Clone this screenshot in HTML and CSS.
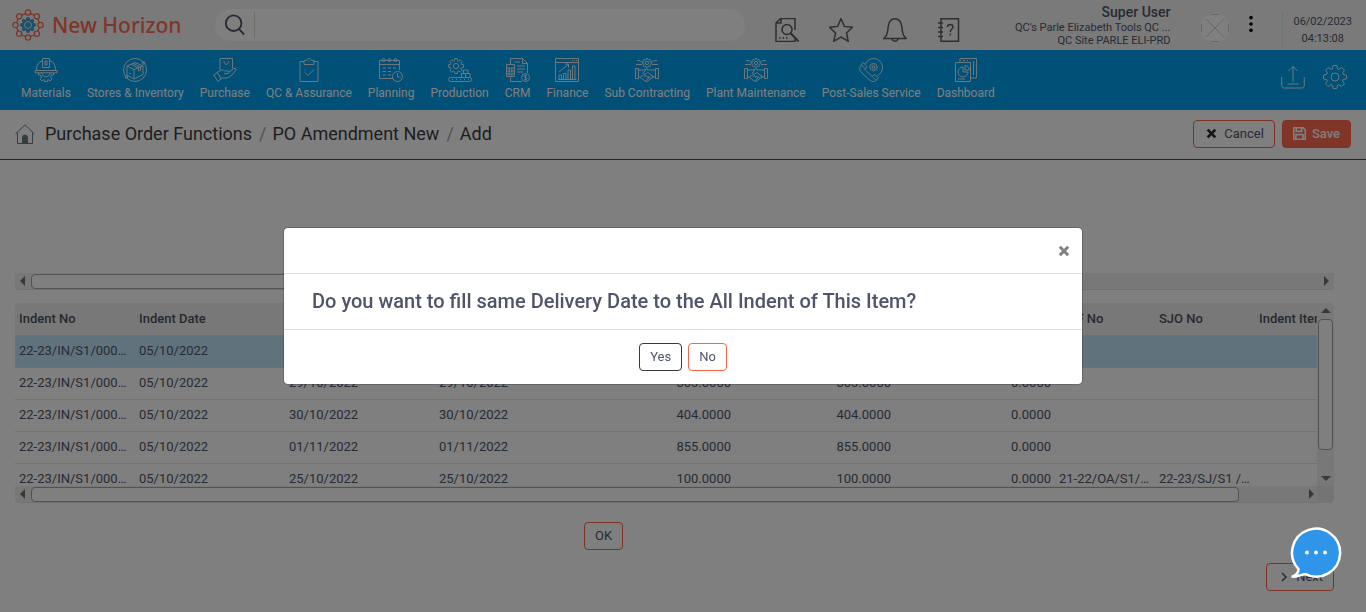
FILE: index.html
```html
<!DOCTYPE html>
<html lang="en">
<head>
<meta charset="utf-8">
<meta name="viewport" content="width=device-width, initial-scale=1">
<title>PO Amendment New</title>
<link rel="stylesheet" href="styles.css">
</head>
<body>
<svg class="sprite" aria-hidden="true">
  <defs>
    <path id="tooth" vector-effect="non-scaling-stroke" d="M-2.6-8.2L-1.9-11.5H1.9L2.6-8.2L4-7.6"/>
    <g id="gear">
      <use href="#tooth"/><use href="#tooth" transform="rotate(45)"/><use href="#tooth" transform="rotate(90)"/><use href="#tooth" transform="rotate(135)"/>
      <use href="#tooth" transform="rotate(180)"/><use href="#tooth" transform="rotate(225)"/><use href="#tooth" transform="rotate(270)"/><use href="#tooth" transform="rotate(315)"/>
      <circle r="4" vector-effect="non-scaling-stroke"/>
    </g>
    <symbol id="handshake" viewBox="0 0 24 24">
      <use href="#gear" transform="translate(12 5) scale(.4)"/>
      <path d="M2 2.500h3l1.500 1.500h1M1 6.500h6M22 2.500h-3L17.500 4h-1M23 6.500h-6"/>
      <path d="M.5 10.500h3v10h-3zM20.500 10.500h3v10h-3zM3.500 12h5l3-1 3 1h6M3.500 19h1.500l5 4 2 .5 6-4.500h2.500M11 11.500l-3 4c1 1.500 3 1 4.500-1.200l6.500 4.700M5.500 19l2-2 1.500 1.500 1.500-1 1 1.500 1.500-.5.500 1.500-2 2.500M15.500 16.500l2.500 2.500M13.500 18l2.500 2.500"/>
    </symbol>
  </defs>
</svg>

<div class="page">
  <header class="topbar">
    <a class="brand" href="#">
      <svg class="brand-mark" viewBox="0 0 32 32" aria-hidden="true">
        <g fill="none" stroke="#f76a52" stroke-width="1.300">
          <circle cx="16" cy="16" r="11.500"/>
          <g fill="#f4f4f4">
            <circle cx="16" cy="3.500" r="2.600"/><circle cx="16" cy="28.500" r="2.600"/><circle cx="3.500" cy="16" r="2.600"/><circle cx="28.500" cy="16" r="2.600"/>
            <circle cx="7.200" cy="7.200" r="2.600"/><circle cx="24.800" cy="7.200" r="2.600"/><circle cx="7.200" cy="24.800" r="2.600"/><circle cx="24.800" cy="24.800" r="2.600"/>
          </g>
        </g>
        <g stroke="#3aa0d4" stroke-width="4" stroke-linecap="round"><path d="M16 10v12M10 16h12M11.800 11.800l8.400 8.400M20.200 11.800l-8.400 8.400"/></g>
        <circle cx="16" cy="16" r="5" fill="#3aa0d4"/><circle cx="16" cy="16" r="3.500" fill="none" stroke="#d8ecf5"/>
      </svg>
      <span>New Horizon</span>
    </a>
    <form class="search">
      <button type="button" class="search-button" aria-label="Search">
        <svg viewBox="0 0 24 24"><circle cx="10.500" cy="10" r="8.500"/><path d="M16.500 16.500l5.500 6"/></svg>
      </button>
      <input type="text" aria-label="Search the application">
    </form>
    <div class="quick">
      <a href="#" aria-label="Find document"><svg viewBox="0 0 24 24"><path d="M20 12V.500H5.500L1 5v18.500h19v-3M1 5h5V.500"/><circle cx="12" cy="11.500" r="5"/><path d="M15.500 15l8 8.500" stroke-width="2"/><path d="M4 20h1.500M7.500 20H9M11 20h1.500"/></svg></a>
      <a href="#" aria-label="Favourites"><svg viewBox="0 0 24 24"><path d="M12 .800l3.400 7.600 8.100.900-6 5.700 1.700 8.200L12 19l-7.200 4.200L6.500 15l-6-5.700 8.100-.900z"/></svg></a>
      <a href="#" aria-label="Notifications"><svg viewBox="0 0 24 24"><path d="M.800 20.500h22.400c-2-1.500-3.200-3.500-3.700-6.500l-.8-6C18 3.500 15.500.800 12 .800S6 3.500 5.300 8l-.8 6c-.5 3-1.700 5-3.700 6.500zM9 20.500c.500 3.500 5.500 3.500 6 0"/></svg></a>
      <a href="#" aria-label="Help"><svg viewBox="0 0 24 24"><path d="M4 .800h17.500v22.400H4zM1 5h5M1 9.500h5M1 14h5M1 18.500h5"/><path d="M10.500 9c0-3.500 5.500-3.500 5.500 0 0 2-2.700 2-2.700 5M13.300 15.500v2"/></svg></a>
    </div>
    <div class="user">
      <strong>Super User</strong>
      <span>QC's Parle Elizabeth Tools QC ...</span>
      <span>QC Site PARLE ELI-PRD</span>
    </div>
    <svg class="avatar" viewBox="0 0 30 30" aria-hidden="true"><circle cx="15" cy="15" r="14.500"/><path d="M6 6l18 18M24 6L6 24M11 1.500h8M11 28.500h8M1.500 11v8M28.500 11v8"/></svg>
    <button type="button" class="more" aria-label="More"><svg viewBox="0 0 22 22"><circle cx="11" cy="4" r="2"/><circle cx="11" cy="11" r="2"/><circle cx="11" cy="18" r="2"/></svg></button>
    <div class="clock"><span>06/02/2023</span><span>04:13:08</span></div>
  </header>

  <nav class="mainnav">
    <a href="#"><svg viewBox="0 0 24 24"><path d="M1 12.500h22v2.300H1zM2.500 12.500c0-5.500 2-8.500 6-10M21.500 12.500c0-5.500-2-8.500-6-10M8.500 9.500v-9h7v9zM11 3h2v4h-2zM4.500 15v2h2l1 2-1.500 2 2 2 2-1.500.500 2h3l.500-2 2 1.500 2-2-1.500-2 1-2h2v-2M8 15c.500 5 7.500 5 8 0"/></svg>Materials</a>
    <a href="#"><svg viewBox="0 0 24 24"><circle cx="12" cy="12" r="11.500"/><path d="M12 4.500l8 3.500v8.500L11 21l-7-4V8zM4 8l7 3.500L20 8M11 11.500V21M8 6.200l7.500 3.800v3l2-.800V9L10 5.400M6 15l2 1"/><circle cx="20.500" cy="5" r="1.300"/><circle cx="3.500" cy="19" r="1.300"/></svg>Stores &amp; Inventory</a>
    <a href="#"><svg viewBox="0 0 24 24"><path d="M7 11.500V.500h12.500v10M11 3c0 4.500 4.500 4.500 4.500 0M4 14.500l4-2.500c2-.5 3 1 5 1h2c1.500.2 1.500 2.500 0 2.700H11M16 14l5-3.500c1.500-.7 2.700.5 1.800 1.800L18 18l-4 2H9l-2.500 2M.800 17l3.500-2.500 4 6L5 23.500z"/></svg>Purchase</a>
    <a href="#"><svg viewBox="0 0 24 24"><path d="M7 3.500H3v20h18v-20h-4M7 2.500h2.500c.5-2.700 4.500-2.700 5 0H17v4H7zM8 14.500l3 3 6-6"/><path d="M11.500 3h1M7.500 12h1"/></svg>QC &amp; Assurance</a>
    <a href="#"><svg viewBox="0 0 24 24"><path d="M14 20.500H.500v-18h20V12M.500 6.500h20M3.500 10H7M9 10h3M14 10h3M3.500 13.500H7M9 13.500h3M3.500 17H7M9 17h3"/><circle cx="4.500" cy="2" r="1.500"/><circle cx="10.500" cy="2" r="1.500"/><circle cx="16.500" cy="2" r="1.500"/><circle cx="18.500" cy="18.500" r="5"/><path d="M18.500 15v4h3"/></svg>Planning</a>
    <a href="#"><svg viewBox="0 0 24 24"><use href="#gear" transform="translate(8 8) scale(.65)"/><path d="M2.500 19.500h19a2 2 0 010 4h-19a2 2 0 010-4zM13.500 19.500v-4h4v4M17.500 19.500v-4H22v4M15.500 15.500V12H20v3.500M4 21.500h1M8 21.500h1M12 21.500h1M16 21.500h1M20 21.500h1"/></svg>Production</a>
    <a href="#"><svg viewBox="0 0 24 24"><path d="M4.500 6V.500h12l5 5V15M16.500.500v5h5M4.500 19.500v4H16M8.500 4H14M11 8h8M11 11h8M11 14h6M.500 6.500h8v12h-8zM.500 10h8M3.200 10v8.500M5.900 10v8.500M.500 13h8M.500 16h8"/><circle cx="19.500" cy="19.500" r="4"/><path d="M21 18c-1-1.200-3-.8-3 .4 0 1.500 3 .8 3 2.300 0 1.200-2 1.500-3 .3M19.500 16.500v6"/></svg>CRM</a>
    <a href="#"><svg viewBox="0 0 24 24"><path d="M.500.500h23v23H.500zM.500 4.500h23M17 2.500h1M19 2.500h1M21 2.500h1M3 21.500h18.500M4 21.500V17h2.500v4.500M8.500 21.500v-6H11v6M13 21.500V12h2.500v9.500M17.500 21.500V8H20v13.500M4 14l9-7.500M10 6h3.500v3.500"/></svg>Finance</a>
    <a href="#"><svg><use href="#handshake"/></svg>Sub Contracting</a>
    <a href="#"><svg><use href="#handshake"/></svg>Plant Maintenance</a>
    <a href="#"><svg viewBox="0 0 24 24"><path d="M6.500 6C8 2.500 11 .500 14.500.500c5 0 9 4 9 9 0 3.500-2 6-4.500 8M1 9l3-4.500 4 4-2 3 7 7 3-2 3.500 3.500-4 3.500c-2 .5-4-.5-6-2.500L3 15C1 13 0 11 1 9zM2.500 7l4 4M14 19.500l3 3"/><use href="#gear" transform="translate(14.500 9) scale(.33)"/></svg>Post-Sales Service</a>
    <a href="#"><svg viewBox="0 0 24 24"><path d="M1.500 4.500h15v19h-15zM6 4.500v-4h16.500V20h-6M19.500 3v14M9 2.500h2M13 2.500h1"/><path d="M9 9a5 5 0 105 5H9zM11 7.500a4.500 4.500 0 014.500 4.500H11zM4 21h7"/></svg>Dashboard</a>
    <div class="tools">
      <a href="#" aria-label="Upload"><svg viewBox="0 0 24 24"><path d="M.700 12v8.500c0 1.500 1 2.500 2.500 2.500h17.600c1.500 0 2.500-1 2.500-2.500V12M12 17V1.500M7.500 6L12 1.500 16.500 6M6.500 19h11"/></svg></a>
      <a href="#" aria-label="Settings"><svg viewBox="0 0 24 24"><use href="#gear" transform="translate(12 12)"/></svg></a>
    </div>
  </nav>

  <div class="crumbbar">
    <a class="home" href="#" aria-label="Home"><svg viewBox="0 0 20 20"><path d="M.500 10L10 .800l9.500 9.200M2.500 8.500v11h15v-11"/><path class="door" d="M7.500 19.500v-6a2.500 2.500 0 015 0v6z"/></svg></a>
    <ol class="crumbs"><li><a href="#">Purchase Order Functions</a></li><li><a href="#">PO Amendment New</a></li><li>Add</li></ol>
    <div class="actions">
      <button type="button" class="btn"><svg class="cross" viewBox="0 0 10 10"><path d="M1.500 1.500l7 7M8.500 1.500l-7 7"/></svg>Cancel</button>
      <button type="button" class="btn btn-primary"><svg class="disk" viewBox="0 0 12 12"><path d="M.700.700h8.600l2 2v8.600H.700zM3 .700v3.300h5V.700M2.700 11V7h6.600v4"/></svg>Save</button>
    </div>
  </div>

  <main class="content">
    <div class="hbar outer"><i class="arrow left"></i><span class="track"><span class="thumb" style="width:78%"></span></span><i class="arrow right"></i></div>

    <div class="grid">
      <div class="grid-view">
        <table>
          <colgroup><col class="w120"><col class="w150"><col class="w150"><col class="w150"><col class="w150"><col class="w160"><col class="w160"><col class="w100"><col class="w100"><col class="w130"></colgroup>
          <thead><tr><th>Indent No</th><th>Indent Date</th><th></th><th></th><th></th><th></th><th></th><th>OAF No</th><th>SJO No</th><th>Indent Item</th></tr></thead>
          <tbody>
            <tr class="selected"><td>22-23/IN/S1/00001</td><td>05/10/2022</td><td></td><td></td><td></td><td></td><td></td><td></td><td></td><td></td></tr>
            <tr><td>22-23/IN/S1/00001</td><td>05/10/2022</td><td>29/10/2022</td><td>29/10/2022</td><td class="num">303.0000</td><td class="num">303.0000</td><td class="num">0.0000</td><td></td><td></td><td></td></tr>
            <tr><td>22-23/IN/S1/00001</td><td>05/10/2022</td><td>30/10/2022</td><td>30/10/2022</td><td class="num">404.0000</td><td class="num">404.0000</td><td class="num">0.0000</td><td></td><td></td><td></td></tr>
            <tr><td>22-23/IN/S1/00001</td><td>05/10/2022</td><td>01/11/2022</td><td>01/11/2022</td><td class="num">855.0000</td><td class="num">855.0000</td><td class="num">0.0000</td><td></td><td></td><td></td></tr>
            <tr><td>22-23/IN/S1/00001</td><td>05/10/2022</td><td>25/10/2022</td><td>25/10/2022</td><td class="num">100.0000</td><td class="num">100.0000</td><td class="num">0.0000</td><td>21-22/OA/S1/0001</td><td>22-23/SJ/S1 /0001</td><td></td></tr>
          </tbody>
        </table>
      </div>
      <div class="vbar"><i class="arrow up"></i><span class="track"><span class="thumb"></span></span><i class="arrow down"></i></div>
      <div class="hbar inner"><i class="arrow left"></i><span class="track"><span class="thumb" style="width:95%"></span></span><i class="arrow right"></i></div>
      <div class="corner"></div>
    </div>

    <div class="ok-row"><button type="button" class="btn btn-small">OK</button></div>
    <div class="next-row"><button type="button" class="btn"><svg class="chevron" viewBox="0 0 10 10"><path d="M3 1l4 4-4 4"/></svg>Next</button></div>
  </main>
</div>

<div class="overlay">
  <section class="modal" role="dialog" aria-modal="true" aria-labelledby="question">
    <div class="modal-head"><button type="button" class="close" aria-label="Close"><svg class="cross" viewBox="0 0 10 10"><path d="M1.500 1.500l7 7M8.500 1.500l-7 7"/></svg></button></div>
    <h2 id="question">Do you want to fill same Delivery Date to the All Indent of This Item?</h2>
    <div class="modal-foot"><button type="button" class="btn btn-small btn-dark">Yes</button><button type="button" class="btn btn-small">No</button></div>
  </section>
</div>

<button type="button" class="chat" aria-label="Chat">
  <svg viewBox="0 0 52 52"><path d="M2.500 49.500C6.500 48 8.500 45.500 8.500 42A24 24 0 1115.500 47.200C11 47.200 7.500 50.500 2.500 49.500z" fill="#2f95e8" stroke="#fff" stroke-width="2.500" stroke-linejoin="round"/><g fill="#fff" stroke="none"><circle cx="17" cy="25.500" r="1.900"/><circle cx="26" cy="25.500" r="1.900"/><circle cx="35" cy="25.500" r="1.900"/></g></svg>
</button>
</body>
</html>
```
FILE: styles.css
```css
* { box-sizing: border-box; }
body {
  margin: 0;
  font: 13px/16px Roboto, "Liberation Sans", sans-serif;
  color: #50546b;
  background: #fff;
}
a { color: inherit; text-decoration: none; }
button { font: inherit; color: inherit; padding: 0; border: 0; background: none; cursor: pointer; }
svg { display: block; fill: none; stroke: currentColor; }
.sprite { position: absolute; width: 0; height: 0; }
.page { min-height: 100vh; overflow: hidden; }

/* Top bar */
.topbar { display: flex; align-items: center; height: 50px; padding: 0 14px 0 12px; background: #f4f4f4; }
.brand { display: flex; align-items: center; gap: 8px; color: #ff6a50; font: 500 21px/32px "Noto Sans", sans-serif; white-space: nowrap; }
.brand-mark { width: 32px; height: 32px; stroke: none; }
.search { display: flex; align-items: center; flex: 0 1 530px; height: 32px; margin-left: 34px; background: #fff; border-radius: 16px; }
.search-button { flex: none; width: 40px; height: 26px; padding-left: 9px; border-right: 1px solid #dcdcdc; }
.search-button svg { width: 22px; height: 24px; stroke-width: 2; }
.search input { flex: 1; min-width: 0; height: 30px; padding: 0 12px; border: 0; outline: 0; background: none; font: inherit; }
.quick { display: flex; gap: 30px; margin: 10px auto 0 30px; color: #5c5c5c; }
.quick svg { width: 24px; height: 24px; stroke-width: 1.5; }
.user { display: flex; flex-direction: column; align-items: flex-end; font-size: 11px; line-height: 13px; white-space: nowrap; }
.user strong { font-size: 14px; font-weight: 500; line-height: 18px; }
.avatar { flex: none; width: 30px; height: 30px; margin: 5px 0 0 30px; fill: #fff; stroke: #d0d0d0; }
.avatar circle { stroke: #fff; }
.more { flex: none; width: 22px; height: 22px; margin: 0 20px 2px 10px; border: 1px solid #fafafa; border-radius: 50%; color: #000; }
.more svg { width: 20px; height: 20px; fill: currentColor; stroke: none; }
.clock { display: flex; flex-direction: column; align-items: center; margin-top: 10px; padding-left: 10px; border-left: 1px solid #e2e2e2; font-size: 11px; line-height: 17px; height: 34px; }

/* Module navigation */
.mainnav { display: flex; gap: 16px; height: 60px; padding: 8px 19px 0 21px; color: #fff; background: #00a1f1; font-size: 12px; line-height: 14px; white-space: nowrap; }
.mainnav > a { display: flex; flex-direction: column; align-items: center; gap: 4px; }
.mainnav svg { width: 24px; height: 24px; overflow: visible; opacity: .85; }
.tools { display: flex; gap: 18px; margin-left: auto; padding-top: 7px; }

/* Breadcrumbs */
.crumbbar { display: flex; align-items: center; height: 50px; padding: 0 15px 2px; border-bottom: 1px solid #50484c; }
.home { color: #66787c; }
.home svg { width: 20px; height: 20px; }
.home .door { fill: currentColor; }
.crumbs { display: flex; margin: 0 0 0 10px; padding: 0; list-style: none; color: #3d3d44; font-size: 18px; line-height: 24px; }
.crumbs li + li::before { content: "/"; padding: 0 6px 0 7px; color: #a6a6a6; }
.actions { display: flex; gap: 7px; margin-left: auto; }
.btn { display: inline-flex; align-items: center; gap: 7px; height: 28px; padding: 0 10px 0 12px; border: 1px solid #ff6347; border-radius: 4px; background: #fff; line-height: 16px; }
.btn-primary { gap: 6px; padding: 0 10px; color: #fff; background: #ff6a50; font-weight: 500; }
.btn-small { padding: 0 10px; }
.btn-dark { border-color: #343a40; }
.cross, .chevron { width: 10px; height: 10px; stroke-width: 2.5; }
.actions .cross { color: #2c2c34; width: 11px; height: 11px; }
.close .cross { width: 12px; height: 12px; }
.chevron { stroke-width: 1.5; }
.disk { width: 13px; height: 13px; stroke-width: 1.5; }

/* Content */
.content { padding: 113px 32px 20px 15px; }
.hbar, .vbar { display: flex; align-items: center; background: #f0f0f0; }
.hbar { height: 17px; padding: 1px 5px; gap: 6px; border-bottom: 1px solid #e2e2e2; border-radius: 0 0 0 4px; }
.inner { padding-right: 3px; }
.vbar { flex-direction: column; padding: 5px 1px; gap: 6px; border-radius: 0 4px 0 0; }
.track { flex: 1; min-width: 0; min-height: 0; display: flex; }
.thumb { height: 15px; border: 1px solid #a4a4a4; border-radius: 4px; background: #fff; }
.vbar .track { width: 15px; }
.vbar .thumb { width: 15px; height: 87%; }
.arrow { flex: none; border: 5px solid transparent; }
.arrow.left { border-left-width: 0; border-right-color: #707070; }
.arrow.right { border-right-width: 0; border-left-color: #707070; }
.arrow.up { border-top-width: 0; border-bottom-color: #707070; }
.arrow.down { border-bottom-width: 0; border-top-color: #707070; }
.outer { margin-bottom: 13px; border-radius: 0 0 4px 4px; }
.grid { display: grid; grid-template: 183px 17px / minmax(0, 1fr) 17px; border-radius: 4px; overflow: hidden; }
.grid-view { overflow: hidden; }
.corner { background: #e9e9e9; }
table { width: 1370px; table-layout: fixed; border-collapse: collapse; }
th, td { height: 32px; padding: 0 4px; text-align: left; overflow: hidden; text-overflow: ellipsis; white-space: nowrap; }
th { background: #f0f0f0; font-weight: 500; color: #50505c; }
td { border-bottom: 1px solid #e2e2e2; }
.selected td { background: #c0e6fa; }
td.num { text-align: right; }
.w100 { width: 100px; }
.w120 { width: 120px; }
.w130 { width: 130px; }
.w150 { width: 150px; }
.w160 { width: 160px; }
.ok-row { display: flex; padding: 19px 0 13px 569px; }
.next-row { display: flex; justify-content: flex-end; }

/* Dialog */
.overlay { position: fixed; inset: 0; padding: 227px 16px 0; background: rgba(0, 0, 0, .5); }
.modal { max-width: 800px; margin: 0 auto; border: 1px solid rgba(0, 0, 0, .2); border-radius: 5px; background: #fff; background-clip: padding-box; }
.modal-head { display: flex; align-items: center; justify-content: flex-end; height: 46px; padding: 0 12px; border-bottom: 1px solid #dee2e6; }
.close { color: #808080; }
.modal h2 { margin: 0; padding: 15px 28px 16px; border-bottom: 1px solid #dee2e6; font-size: 20px; font-weight: 500; line-height: 24px; }
.modal-foot { display: flex; justify-content: center; gap: 6px; padding: 13px; }
.chat { position: fixed; right: 24px; bottom: 33px; }
.chat svg { width: 52px; height: 52px; }
```
